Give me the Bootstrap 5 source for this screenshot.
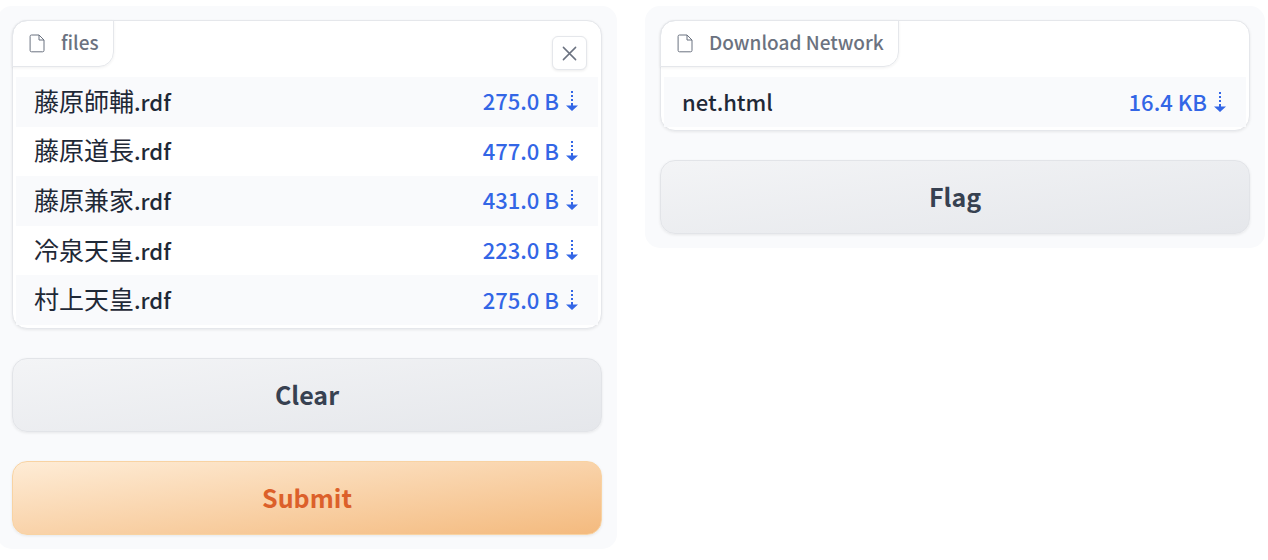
<!DOCTYPE html>
<html lang="ja">
<head>
<meta charset="utf-8">
<meta name="viewport" content="width=device-width, initial-scale=1">
<title>Network</title>
<link href="https://cdn.jsdelivr.net/npm/bootstrap@5.3.0/dist/css/bootstrap.min.css" rel="stylesheet">
<style>
body{font-family:"Noto Sans CJK JP",sans-serif;color:#1f2937;background:#fff}
.layout{gap:28px;margin:6px 3px 0 -3px}
.panel{flex:1 1 0;min-width:0;background:#f9fafc;border-radius:15px;padding:14px 15px;gap:29px}
.file-box{background:#fff;border:1px solid #e5e7eb;border-radius:15px;padding:0 3px 3px;box-shadow:0 1px 3px rgba(0,0,0,.08)}
.file-head{height:57px;margin:-1px -3px 0 -4px}
.file-label{height:47px;border:1px solid #e5e7eb;border-radius:15px 0 15px 0;padding:0 14px 0 16px;gap:15px;color:#6b7280;font-size:19px;font-weight:500;line-height:28px;box-shadow:0 1px 3px rgba(0,0,0,.06)}
.file-label span{padding-bottom:4px}
.close-btn{width:35px;height:34px;margin:16px 14px 0 0;border:1px solid #e5e7eb;border-radius:6px;background:#fff;color:#6b7280;box-shadow:0 1px 3px rgba(0,0,0,.08)}
.file-table{font-size:22px;font-weight:500;line-height:30px}
.file-table.many{height:248px}
.file-table td{height:49px;padding:0 20px 3px 18px;vertical-align:middle}
.file-table.single td{height:50px}
.file-table tr:nth-child(odd){background:#f9fafc}
.kanji{font-size:25px;font-weight:400}
.file-table a{color:#3366e6;text-decoration:none}
.file-table a svg{margin-left:7px;vertical-align:-1px}
.action{height:74px;padding:0 0 2px;border:1px solid #e2e4e8;border-radius:15px;font-size:25px;line-height:36px;font-weight:700;color:#374151;background:linear-gradient(to bottom right,#f3f4f6,#e5e7eb);box-shadow:0 1px 3px rgba(0,0,0,.08)}
.action.go{color:#dc602a;border-color:#f8d3a3;background:linear-gradient(to bottom right,#feecd6,#f4ba7e)}
</style>
</head>
<body>
<main class="layout d-flex align-items-start">
  <section class="panel d-flex flex-column">
    <div class="file-box">
      <div class="file-head d-flex justify-content-between align-items-start">
        <div class="file-label d-flex align-items-center">
          <svg width="17" height="19" viewBox="0 0 17 19" fill="none" stroke="currentColor" stroke-width="1" stroke-linejoin="round" aria-hidden="true"><path d="M2.5 1H10l5 5v10.4a1.4 1.4 0 0 1-1.4 1.4H2.5a1.4 1.4 0 0 1-1.4-1.4v-14A1.4 1.4 0 0 1 2.5 1zM10 1v5h5"/></svg>
          <span>files</span>
        </div>
        <button type="button" class="close-btn d-flex align-items-center justify-content-center p-0" aria-label="Clear files">
          <svg width="15" height="15" viewBox="0 0 15 15" fill="none" stroke="currentColor" stroke-width="1.5" stroke-linecap="round" aria-hidden="true"><path d="M1.4 1.4l12.2 12.2M13.6 1.4L1.4 13.6"/></svg>
        </button>
      </div>
      <table class="file-table many w-100">
        <tbody>
          <tr><td><span class="kanji">藤原師輔</span>.rdf</td><td class="text-end"><a href="#">275.0 B<svg width="12" height="20" viewBox="0 0 12 20" fill="currentColor" aria-hidden="true"><path d="M5 0h2v2H5zM5 4h2v2H5zM5 8h2v2H5zM5 12h2v2.5h5L6 20 0 14.5h5z"/></svg></a></td></tr>
          <tr><td><span class="kanji">藤原道長</span>.rdf</td><td class="text-end"><a href="#">477.0 B<svg width="12" height="20" viewBox="0 0 12 20" fill="currentColor" aria-hidden="true"><path d="M5 0h2v2H5zM5 4h2v2H5zM5 8h2v2H5zM5 12h2v2.5h5L6 20 0 14.5h5z"/></svg></a></td></tr>
          <tr><td><span class="kanji">藤原兼家</span>.rdf</td><td class="text-end"><a href="#">431.0 B<svg width="12" height="20" viewBox="0 0 12 20" fill="currentColor" aria-hidden="true"><path d="M5 0h2v2H5zM5 4h2v2H5zM5 8h2v2H5zM5 12h2v2.5h5L6 20 0 14.5h5z"/></svg></a></td></tr>
          <tr><td><span class="kanji">冷泉天皇</span>.rdf</td><td class="text-end"><a href="#">223.0 B<svg width="12" height="20" viewBox="0 0 12 20" fill="currentColor" aria-hidden="true"><path d="M5 0h2v2H5zM5 4h2v2H5zM5 8h2v2H5zM5 12h2v2.5h5L6 20 0 14.5h5z"/></svg></a></td></tr>
          <tr><td><span class="kanji">村上天皇</span>.rdf</td><td class="text-end"><a href="#">275.0 B<svg width="12" height="20" viewBox="0 0 12 20" fill="currentColor" aria-hidden="true"><path d="M5 0h2v2H5zM5 4h2v2H5zM5 8h2v2H5zM5 12h2v2.5h5L6 20 0 14.5h5z"/></svg></a></td></tr>
        </tbody>
      </table>
    </div>
    <button type="button" class="action w-100">Clear</button>
    <button type="button" class="action go w-100">Submit</button>
  </section>
  <section class="panel d-flex flex-column">
    <div class="file-box">
      <div class="file-head d-flex align-items-start">
        <div class="file-label d-flex align-items-center">
          <svg width="17" height="19" viewBox="0 0 17 19" fill="none" stroke="currentColor" stroke-width="1" stroke-linejoin="round" aria-hidden="true"><path d="M2.5 1H10l5 5v10.4a1.4 1.4 0 0 1-1.4 1.4H2.5a1.4 1.4 0 0 1-1.4-1.4v-14A1.4 1.4 0 0 1 2.5 1zM10 1v5h5"/></svg>
          <span>Download Network</span>
        </div>
      </div>
      <table class="file-table single w-100">
        <tbody>
          <tr><td>net.html</td><td class="text-end"><a href="#">16.4 KB<svg width="12" height="20" viewBox="0 0 12 20" fill="currentColor" aria-hidden="true"><path d="M5 0h2v2H5zM5 4h2v2H5zM5 8h2v2H5zM5 12h2v2.5h5L6 20 0 14.5h5z"/></svg></a></td></tr>
        </tbody>
      </table>
    </div>
    <button type="button" class="action w-100">Flag</button>
  </section>
</main>
<script src="https://cdn.jsdelivr.net/npm/bootstrap@5.3.0/dist/js/bootstrap.bundle.min.js"></script>
</body>
</html>
